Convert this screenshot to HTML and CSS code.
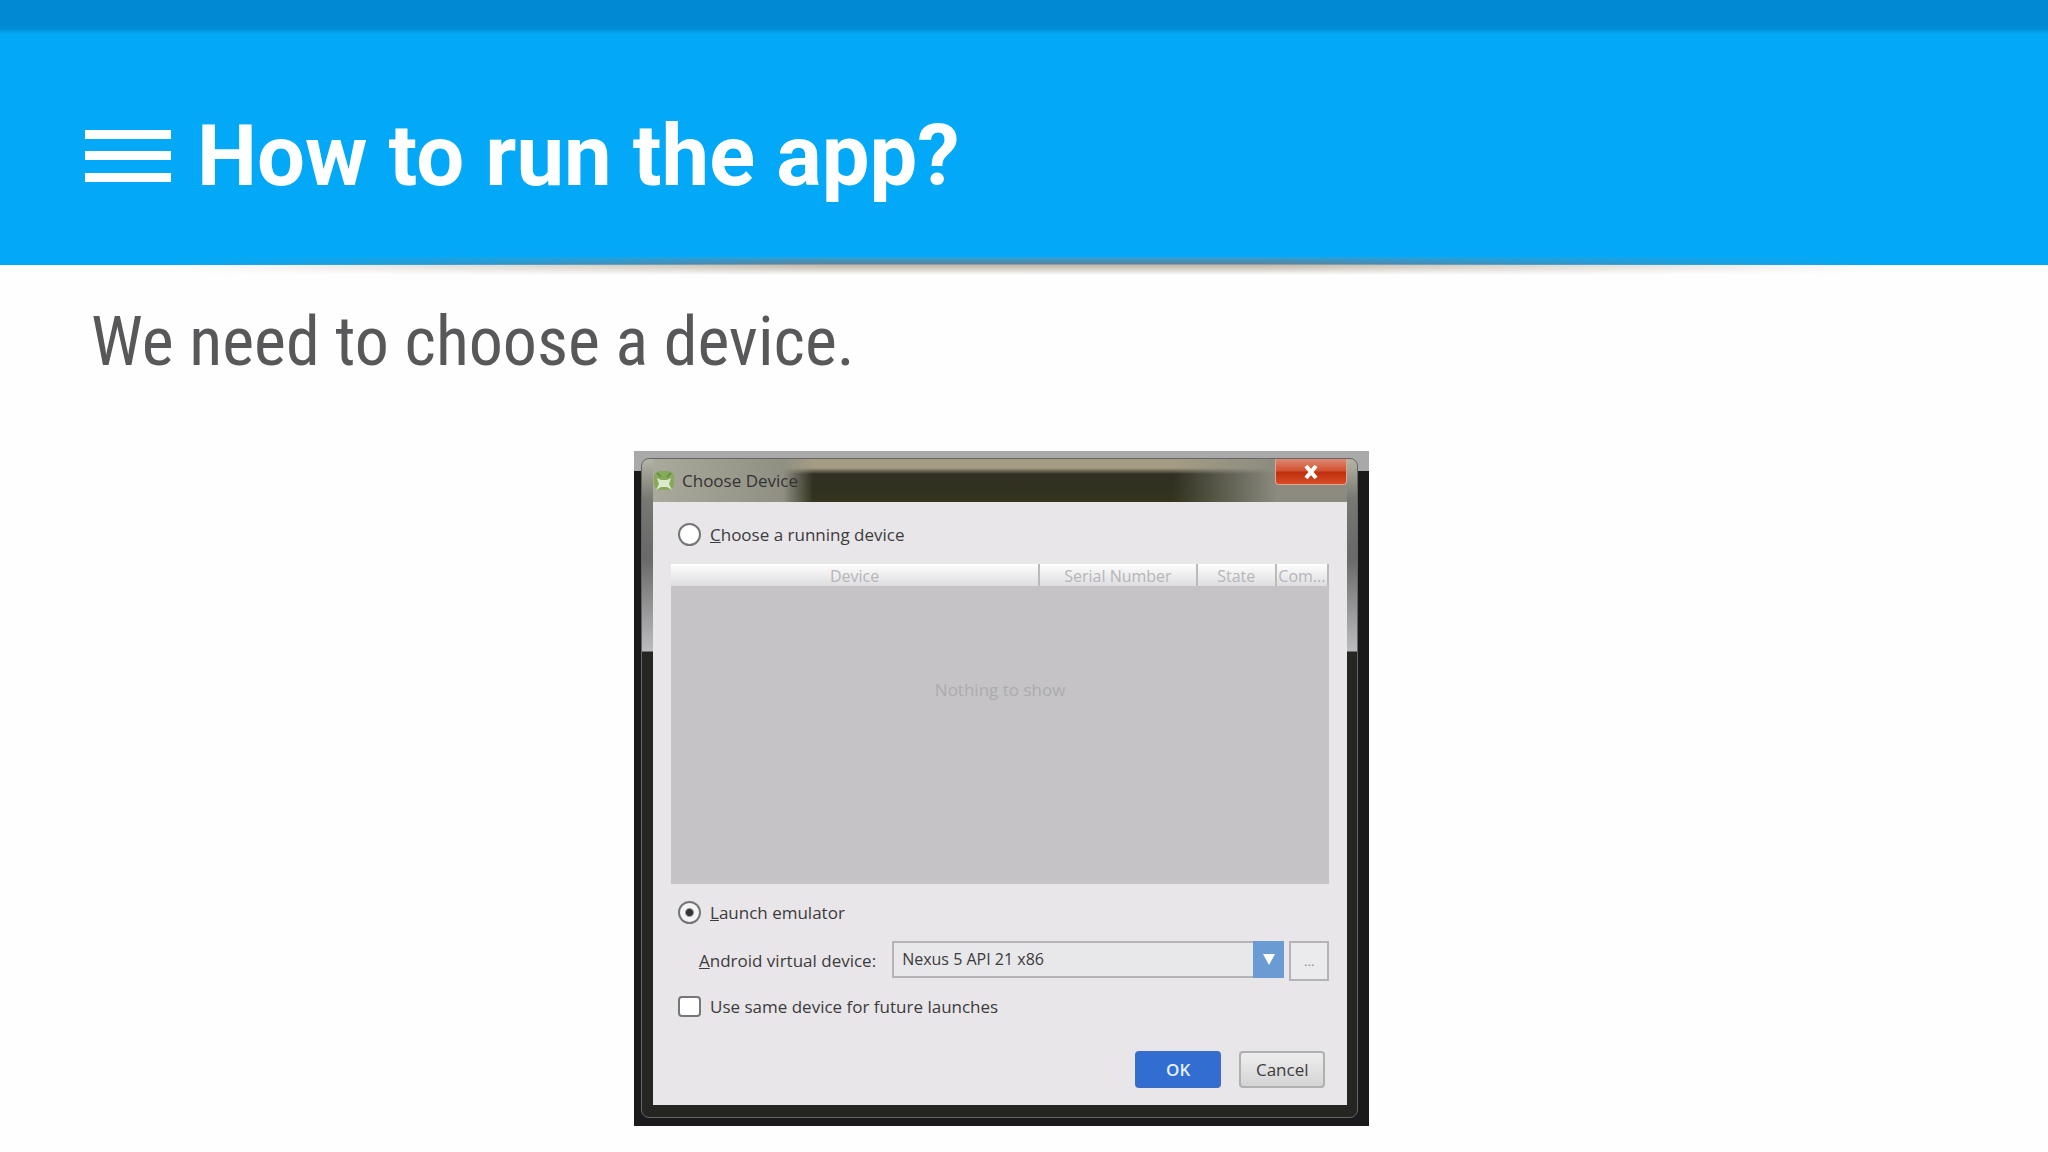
FILE: index.html
```html
<!DOCTYPE html>
<html lang="en">
<head>
    <meta charset="UTF-8">
    <meta name="viewport" content="width=device-width, initial-scale=1.0">
    <title>How to run the app?</title>
    <link rel="stylesheet" href="styles.css">
</head>
<body>
    <header class="header">
        <div class="status-bar"></div>
        <div class="toolbar">
            <button class="menu" type="button" aria-label="Menu">
                <svg width="86" height="52" viewBox="0 0 86 52" fill="#fff">
                    <rect width="86" height="9"/>
                    <rect y="21" width="86" height="9"/>
                    <rect y="43" width="86" height="9"/>
                </svg>
            </button>
            <h1>How to run the app?</h1>
        </div>
    </header>
    <div class="shadow"></div>

    <main>
        <p class="lead">We need to choose a device.</p>

        <div class="backdrop">
            <form class="window">
                <div class="title-bar">
                    <svg class="app-icon" width="22" height="22" viewBox="0 0 22 22">
                        <rect x="1" y="1" width="20" height="19" rx="6" fill="#86a95a"/>
                        <path d="M4 3l4 4M18 3l-4 4" stroke="#6b9440" stroke-width="2"/>
                        <path d="M4 8l4 2h6l4-2-2 6 3 6-5-3H8l-5 3 3-6z" fill="#dcebcb"/>
                    </svg>
                    <h2>Choose Device</h2>
                    <button class="close" type="button" aria-label="Close">
                        <svg width="14" height="14" viewBox="0 0 14 14">
                            <path d="M2 1l10 12M12 1L2 13" stroke="#fff" stroke-width="4"/>
                        </svg>
                    </button>
                </div>
                <div class="content">
                    <label class="option"><input type="radio" name="target"><span><u>C</u>hoose a running device</span></label>
                    <div class="devices">
                        <table>
                            <thead>
                                <tr>
                                    <th class="col-device">Device</th>
                                    <th class="col-serial">Serial Number</th>
                                    <th class="col-state">State</th>
                                    <th class="col-com">Com...</th>
                                </tr>
                            </thead>
                        </table>
                        <p class="empty">Nothing to show</p>
                    </div>
                    <label class="option"><input type="radio" name="target" checked><span><u>L</u>aunch emulator</span></label>
                    <div class="avd">
                        <label for="avd"><u>A</u>ndroid virtual device:</label>
                        <div class="combo">
                            <select id="avd">
                                <option>Nexus 5 API 21 x86</option>
                            </select>
                            <span class="arrow"></span>
                        </div>
                        <button class="more" type="button" aria-label="More">...</button>
                    </div>
                    <label class="option same"><input type="checkbox"><span>Use same device for future launches</span></label>
                    <div class="actions">
                        <button class="button ok" type="button">OK</button>
                        <button class="button" type="button">Cancel</button>
                    </div>
                </div>
            </form>
        </div>
    </main>
</body>
</html>
```

FILE: styles.css
```css
* { box-sizing: border-box; }
body { margin: 0; background: #fefefe; font-family: Roboto, sans-serif; }
h1, h2, p { margin: 0; }
button { padding: 0; border: none; font-family: inherit; cursor: pointer; }

.header { background: #03a9f7; }
.status-bar { height: 34px; background: linear-gradient(#0289d4 28px, #03a9f7); }
.toolbar { display: flex; align-items: center; gap: 26px; height: 231px; padding: 12px 85px 0; }
.menu { display: flex; background: none; }
h1 { color: #fff; font-size: 85px; line-height: 100px; font-weight: 700; }

.shadow { height: 18px; margin-top: -8px; background: linear-gradient(rgba(130,150,160,0.3), #5d829c 7px, #c3b9ac 8px, #cfc8be 11px, rgba(255,255,255,0)); -webkit-mask-image: linear-gradient(90deg, transparent 8%, #000 40%, #000 62%, transparent 92%); mask-image: linear-gradient(90deg, transparent 8%, #000 40%, #000 62%, transparent 92%); }

main { padding: 27px 91px; }
.lead { color: #58585a; font-family: "Roboto Condensed", "Liberation Sans Narrow", Roboto, sans-serif; font-size: 68px; line-height: 80px; }

.backdrop { width: 39.4%; min-width: 640px; margin: 69px auto 0 29.1%; padding: 7px 11px 8px 7px; background: linear-gradient(#a9a9a9 20px, #1b191b 20px); font-family: "Open Sans", "Noto Sans", sans-serif; font-size: 17px; color: #3c3b3d; }
.window { padding: 0 10px 12px 11px; border: 1px solid #656565; border-radius: 8px; background: linear-gradient(#b5b5a6, #777872 40px, #686968 100px, #bcbcbf 192px, #252522 193px); }

.title-bar { display: flex; align-items: center; height: 43px; background: linear-gradient(90deg, #a9aa9c, #8f9082 130px, transparent 160px, transparent 75%, #8b8b80 90%), linear-gradient(#a49c83 9px, #302f23 15px, #34341f); }
.app-icon { margin-right: 7px; }
h2 { font-size: 17px; line-height: 24px; font-weight: 400; color: #333; }
.close { display: flex; align-items: center; justify-content: center; align-self: flex-start; width: 72px; height: 26px; margin-left: auto; border: 1px solid #e2a493; border-top: none; border-radius: 0 0 4px 4px; background: linear-gradient(#dd8874, #d2512f 12px, #bd2e0d 13px, #d94c26); }

.content { padding: 20px 18px 17px; background: #e8e6e9; }
.option { display: flex; align-items: center; gap: 9px; height: 24px; padding-left: 7px; }
input { appearance: none; width: 23px; height: 23px; margin: 0; border: 2px solid #767577; background: #fff; }
input[type="radio"] { border-radius: 50%; }
input[type="radio"]:checked { background: radial-gradient(circle, #343436 3px, #f4f4f5 5px); }
input[type="checkbox"] { height: 21px; border-radius: 4px; }

.devices { height: 320px; margin: 18px 0 16px; background: #c5c3c6; }
table { width: 100%; border-collapse: collapse; table-layout: fixed; }
th { height: 22px; padding: 2px 0 0; border-right: 2px solid #bbb; background: linear-gradient(#fff, #dddcdf); font-size: 16px; line-height: 20px; font-weight: 400; color: #b6b5b8; }
.col-device { width: 56%; }
.col-serial { width: 24%; }
.col-state { width: 12%; }
.col-com { width: 8%; }
.empty { padding-top: 92px; text-align: center; line-height: 24px; color: #acabae; }

.avd { display: flex; align-items: flex-start; margin-top: 17px; padding-left: 28px; line-height: 40px; }
.combo { position: relative; flex: 1; height: 37px; margin: 0 5px 0 16px; }
select { display: block; appearance: none; width: 100%; height: 37px; padding: 0 10px 1px 8px; border: 2px solid #b4b3b7; border-radius: 0; background: #e8e7ea; color: inherit; font-family: inherit; font-size: 16px; }
.arrow { position: absolute; top: 0; right: 0; display: grid; place-items: center; width: 31px; height: 37px; background: #6b9bd3; pointer-events: none; }
.arrow::before { content: ""; border: 6px solid transparent; border-top: 11px solid #fff; border-bottom: none; }
.more { width: 40px; height: 40px; border: 2px solid #b4b3b7; background: #ebeaed; color: #8c8b8e; }

.same { margin-top: 13px; }
.actions { display: flex; justify-content: flex-end; gap: 18px; margin-top: 33px; padding-right: 4px; }
.button { width: 86px; height: 37px; border: 2px solid #b0afb1; border-radius: 4px; background: linear-gradient(#efeeef, #d5d4d5); font-size: 17px; color: #3c3b3d; }
.ok { border-color: #3a6dc6; background: #326dd2; color: #e5efff; font-weight: 600; }
```
